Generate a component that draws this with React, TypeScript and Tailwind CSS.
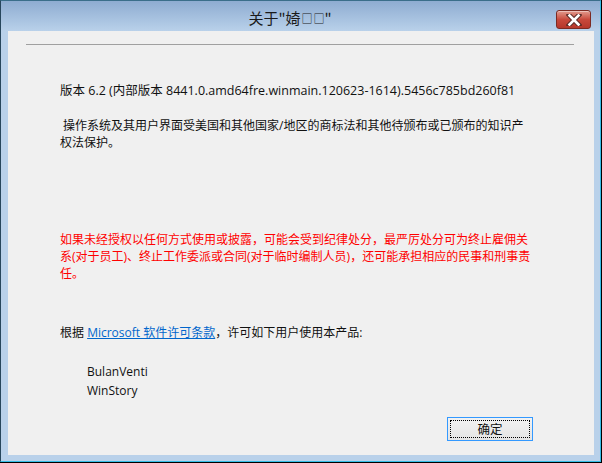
import React from "react";

export default function App() {
  const font = { fontFamily: '"Open Sans", "Noto Sans CJK SC", sans-serif' };
  return (
    <div className="w-[602px] h-[463px] bg-black overflow-hidden" style={font}>
      <div className="w-[601px] h-[462px] flex flex-col border-l border-t border-l-[#27465c] border-t-[#3a6e8a] border-r border-b border-r-[#36bde6] border-b-[#36bde6] bg-[#b9d1ea]">
        {/* title bar */}
        <div className="h-[30px] relative flex items-center justify-center bg-gradient-to-b from-[#8eacd1] to-[#b9d1ea]">
          <div className="text-[15px] text-[#1a1a1a] pr-[21px] pt-[2px] leading-none flex items-end" style={{ fontFamily: '"Noto Sans CJK SC", sans-serif' }}>
            <span>关于"婍</span>
            <span className="text-[11px] leading-none mb-[1px] ml-[1px] mr-[-1px] tracking-[1px]">□□</span>
            <span>"</span>
          </div>
          <div className="absolute left-[555px] top-[9px] w-[35px] h-[19px] rounded-[3px] border border-[#7c2a22] bg-gradient-to-b from-[#e29a8e] via-[#c8493c] to-[#b6372b] flex items-center justify-center shadow-[inset_0_1px_0_rgba(255,255,255,0.4)]">
            <svg width="16" height="12" viewBox="0 0 16 12">
              <path d="M3 1 L13 11 M13 1 L3 11" stroke="#5a2a26" strokeWidth="4.6" strokeLinecap="square" />
              <path d="M3.5 1.5 L12.5 10.5 M12.5 1.5 L3.5 10.5" stroke="#ffffff" strokeWidth="2.6" strokeLinecap="square" />
            </svg>
          </div>
        </div>
        {/* frame around client */}
        <div className="flex-1 pl-[7px] pr-[6px] pb-[6px] flex">
          <div className="flex-1 bg-[#f0f0f0] flex flex-col text-[12px] text-[#111]">
            <div className="mt-[13px] ml-[18px] w-[548px] h-px bg-[#a0a0a0]" />
            <div className="pl-[52px] whitespace-nowrap">
              <div className="mt-[37px] leading-[17px] text-[12.5px]">
                版本 6.2 (内部版本 8441.0.amd64fre.winmain.120623-1614).5456c785bd260f81
              </div>
              <div className="mt-[18px] leading-[17px]">
                &nbsp;操作系统及其用户界面受美国和其他国家/地区的商标法和其他待颁布或已颁布的知识产
                <br />
                权法保护。
              </div>
              <div className="mt-[80px] leading-[17px] text-[#ff0000]">
                如果未经授权以任何方式使用或披露，可能会受到纪律处分，最严厉处分可为终止雇佣关
                <br />
                系(对于员工)、终止工作委派或合同(对于临时编制人员)，还可能承担相应的民事和刑事责
                <br />
                任。
              </div>
              <div className="mt-[42px] leading-[17px]">
                根据 <span className="text-[#0066cc] underline">Microsoft 软件许可条款</span>，许可如下用户使用本产品:
              </div>
              <div className="mt-[21px] pl-[27px] leading-[19px]">
                <div>BulanVenti</div>
                <div>WinStory</div>
              </div>
            </div>
            <div className="flex justify-end pr-[61px] mt-[17px]">
              <div className="w-[86px] h-[24px] border border-[#3399ff] bg-gradient-to-b from-[#f2f2f2] to-[#e4e4e4] p-[2px]">
                <div className="w-full h-full border border-dotted border-black flex items-center justify-center text-[12.5px] leading-none" style={{ fontFamily: '"Noto Sans CJK SC", sans-serif' }}>
                  确定
                </div>
              </div>
            </div>
          </div>
        </div>
      </div>
    </div>
  );
}
